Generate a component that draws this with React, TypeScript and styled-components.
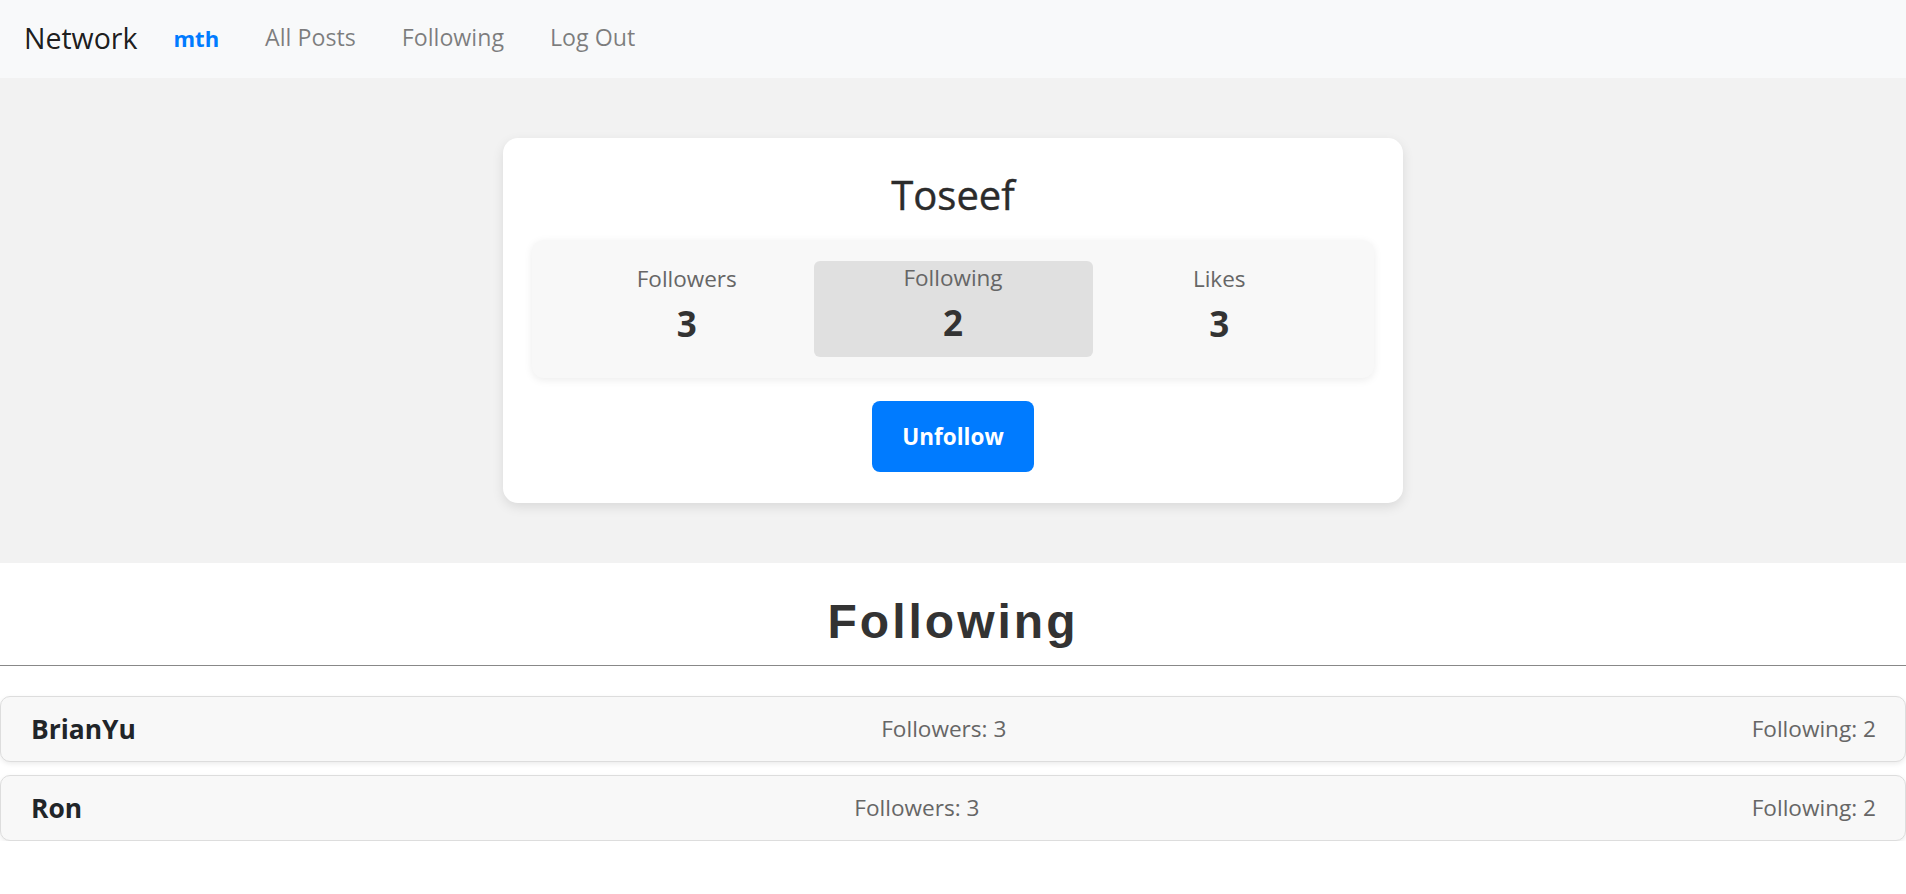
import React from "react";
import styled, { createGlobalStyle } from "styled-components";

const GlobalStyle = createGlobalStyle`
  html, body {
    margin: 0;
    padding: 0;
    background: #ffffff;
    font-family: "Segoe UI", "Open Sans", "Noto Sans", sans-serif;
    color: #212529;
  }
  * { box-sizing: border-box; }
`;

const NavBar = styled.nav`
  height: 78px;
  background: #f8f9fa;
  display: flex;
  align-items: center;
  padding: 0 24px 2px;
`;

const Brand = styled.a`
  font-size: 28.5px;
  color: rgba(0, 0, 0, 0.9);
  text-decoration: none;
  margin-right: 36px;
  line-height: 1;
`;

const NavLinks = styled.div`
  display: flex;
  align-items: center;
  gap: 46px;
`;

const NavLink = styled.a<{ $active?: boolean }>`
  line-height: 1;
  text-decoration: none;
  color: ${(p) => (p.$active ? "#007bff" : "rgba(0, 0, 0, 0.5)")};
  font-weight: ${(p) => (p.$active ? 700 : 400)};
  font-size: ${(p) => (p.$active ? "22px" : "23.2px")};
`;

const ProfileSection = styled.section`
  background: #f2f2f2;
  padding: 60px 0;
`;

const ProfileCard = styled.div`
  width: 900px;
  margin: 0 auto;
  background: #ffffff;
  border-radius: 15px;
  box-shadow: 0 4px 12px rgba(0, 0, 0, 0.1);
  padding: 30px 29px 31px;
  display: flex;
  flex-direction: column;
  align-items: stretch;
`;

const UserName = styled.h2`
  margin: 2px 0 20px;
  text-align: center;
  font-size: 40px;
  font-weight: 500;
  line-height: 50px;
  color: #2b2b2b;
  -webkit-text-stroke: 0.4px #2b2b2b;
`;

const StatsBox = styled.div`
  background: #f8f8f8;
  border-radius: 12px;
  box-shadow: 0 2px 8px rgba(0, 0, 0, 0.08);
  padding: 21px 28px;
  display: grid;
  grid-template-columns: 1fr 279px 1fr;
`;

const StatItem = styled.div<{ $active?: boolean }>`
  display: flex;
  flex-direction: column;
  align-items: center;
  min-height: 95px;
  border-radius: 6px;
  background: ${(p) => (p.$active ? "#e0e0e0" : "transparent")};
  margin-top: ${(p) => (p.$active ? "0" : "1px")};
`;

const StatLabel = styled.div`
  font-size: 22.5px;
  line-height: 34.5px;
  color: #666666;
`;

const StatValue = styled.div`
  font-size: 35px;
  font-weight: 700;
  line-height: 54px;
  color: #333333;
`;

const ButtonRow = styled.div`
  display: flex;
  justify-content: center;
  margin-top: 23px;
`;

const FollowButton = styled.button`
  height: 71px;
  padding: 0 30px;
  border: none;
  border-radius: 8px;
  background: #007bff;
  color: #ffffff;
  font-family: inherit;
  font-size: 22.5px;
  font-weight: 700;
  cursor: pointer;
`;

const ListSection = styled.section`
  background: #ffffff;
`;

const ListTitle = styled.h1`
  margin: 30px 0 0;
  text-align: center;
  font-family: "Liberation Sans", Arimo, Arial, sans-serif;
  font-size: 48px;
  line-height: 57.6px;
  font-weight: 700;
  letter-spacing: 3px;
  color: #333333;
`;

const Divider = styled.hr`
  margin: 14px 0 0;
  border: none;
  border-top: 1px solid #888888;
`;

const UserList = styled.div`
  margin-top: 30px;
  display: flex;
  flex-direction: column;
  gap: 13px;
`;

const UserRow = styled.div`
  height: 66px;
  display: flex;
  align-items: center;
  justify-content: space-between;
  padding: 0 29px 0 30px;
  background: #f8f8f8;
  border: 1px solid #dddddd;
  border-radius: 10px;
  box-shadow: 0 2px 5px rgba(0, 0, 0, 0.08);
`;

const RowName = styled.div`
  font-size: 26.4px;
  font-weight: 700;
  color: #212529;
`;

const RowStat = styled.div`
  font-size: 22.6px;
  color: #666666;
`;

const stats = [
  { label: "Followers", value: 3 },
  { label: "Following", value: 2, active: true },
  { label: "Likes", value: 3 },
];

const following = [
  { name: "BrianYu", followers: 3, following: 2 },
  { name: "Ron", followers: 3, following: 2 },
];

export default function App() {
  return (
    <>
      <GlobalStyle />
      <NavBar>
        <Brand href="#">Network</Brand>
        <NavLinks>
          <NavLink href="#" $active>
            mth
          </NavLink>
          <NavLink href="#">All Posts</NavLink>
          <NavLink href="#">Following</NavLink>
          <NavLink href="#">Log Out</NavLink>
        </NavLinks>
      </NavBar>
      <ProfileSection>
        <ProfileCard>
          <UserName>Toseef</UserName>
          <StatsBox>
            {stats.map((s) => (
              <StatItem key={s.label} $active={s.active}>
                <StatLabel>{s.label}</StatLabel>
                <StatValue>{s.value}</StatValue>
              </StatItem>
            ))}
          </StatsBox>
          <ButtonRow>
            <FollowButton>Unfollow</FollowButton>
          </ButtonRow>
        </ProfileCard>
      </ProfileSection>
      <ListSection>
        <ListTitle>Following</ListTitle>
        <Divider />
        <UserList>
          {following.map((u) => (
            <UserRow key={u.name}>
              <RowName>{u.name}</RowName>
              <RowStat>Followers: {u.followers}</RowStat>
              <RowStat>Following: {u.following}</RowStat>
            </UserRow>
          ))}
        </UserList>
      </ListSection>
    </>
  );
}
